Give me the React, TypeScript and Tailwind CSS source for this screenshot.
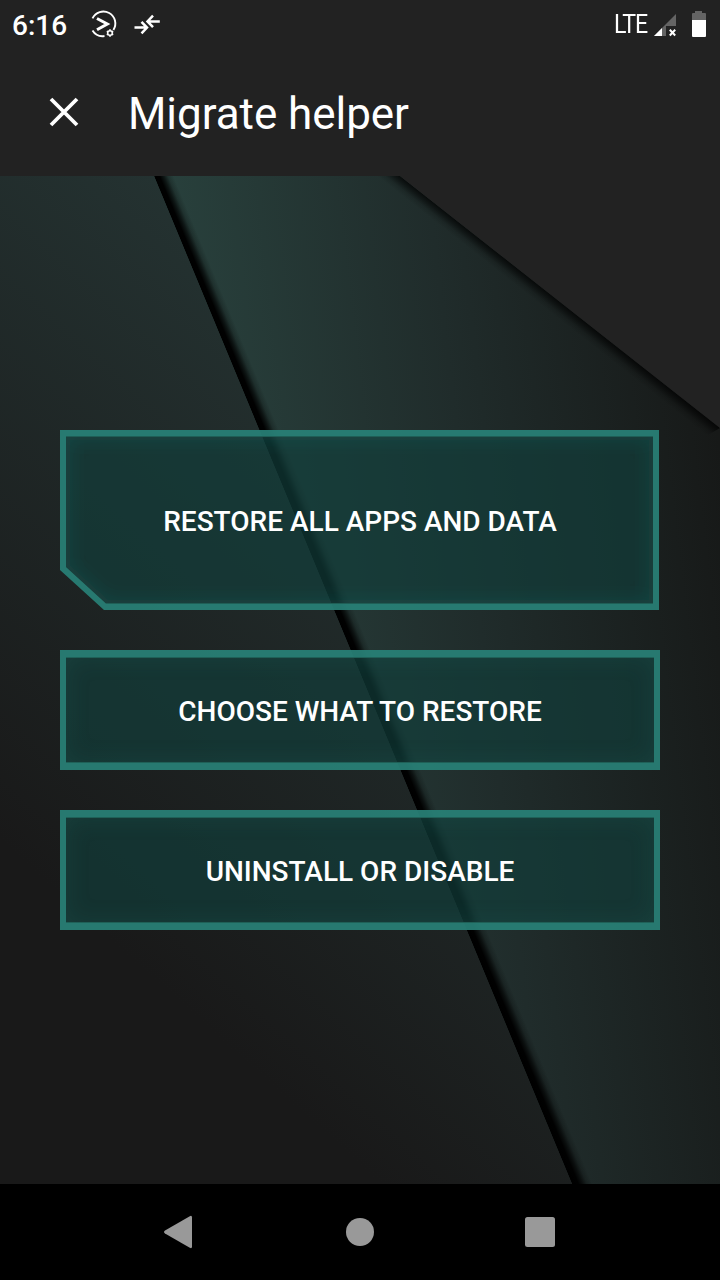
import React from "react";

function Backdrop() {
  return (
    <svg className="absolute inset-0 h-full w-full" viewBox="0 176 720 1008" preserveAspectRatio="none" aria-hidden="true">
      <defs>
        <linearGradient id="left" gradientUnits="userSpaceOnUse" x1="155" y1="176" x2="-245" y2="620">
          <stop offset="0" stopColor="#243231" />
          <stop offset="1" stopColor="#191919" />
        </linearGradient>
        <linearGradient id="right" gradientUnits="userSpaceOnUse" x1="165" y1="176" x2="680" y2="114">
          <stop offset="0" stopColor="#28403c" />
          <stop offset="0.5" stopColor="#202c2b" />
          <stop offset="1" stopColor="#171918" />
        </linearGradient>
        <linearGradient id="seam" gradientUnits="userSpaceOnUse" x1="154" y1="176" x2="170.600" y2="169.100">
          <stop offset="0" stopColor="#000" />
          <stop offset="0.28" stopColor="#000" stopOpacity="0.98" />
          <stop offset="0.5" stopColor="#000" stopOpacity="0.65" />
          <stop offset="0.72" stopColor="#000" stopOpacity="0.22" />
          <stop offset="1" stopColor="#000" stopOpacity="0" />
        </linearGradient>
        <linearGradient id="corner" gradientUnits="userSpaceOnUse" x1="400" y1="176" x2="391.300" y2="187.050">
          <stop offset="0" stopColor="#000" stopOpacity="0.75" />
          <stop offset="0.3" stopColor="#000" stopOpacity="0.5" />
          <stop offset="0.65" stopColor="#000" stopOpacity="0.15" />
          <stop offset="1" stopColor="#000" stopOpacity="0" />
        </linearGradient>
      </defs>
      <rect y="176" width="720" height="1008" fill="url(#right)" />
      <polygon points="154,176 200,176 618,1184 572,1184" fill="url(#seam)" />
      <polygon points="0,176 154,176 572,1184 0,1184" fill="url(#left)" />
      <polygon points="370,176 400,176 720,428 703,438" fill="url(#corner)" />
      <polygon points="400,176 720,176 720,428" fill="#222222" />
    </svg>
  );
}

function CutFrame() {
  return (
    <svg className="absolute inset-0" width="600" height="180" viewBox="0 0 600 180" aria-hidden="true">
      <defs>
        <clipPath id="inner">
          <path d="M6 6H593V173.500H46L6 137Z" />
        </clipPath>
        <filter id="soft" x="-10%" y="-20%" width="120%" height="140%">
          <feGaussianBlur stdDeviation="9" />
        </filter>
      </defs>
      <path d="M6 6H593V173.500H46L6 137Z" fill="#123e3b" fillOpacity="0.68" />
      <g clipPath="url(#inner)">
        <path d="M0 0H599V180H44L0 140Z" fill="none" stroke="#2b8377" strokeOpacity="0.2" strokeWidth="20" filter="url(#soft)" />
      </g>
      <path fillRule="evenodd" d="M0 0H599V180H44L0 140ZM6 6V137L46 173.500H593V6Z" fill="#288177" fillOpacity="0.92" />
      <path d="M6 6.500H593M46 173.500H593" stroke="#1f5e56" strokeWidth="1" />
    </svg>
  );
}

function MenuButton({ label, cut = false }: { label: string; cut?: boolean }) {
  return (
    <button
      className={
        cut
          ? "relative flex h-[180px] w-full items-center justify-center"
          : "relative flex h-[120px] w-full items-center justify-center border-x-6 border-y-7 border-[#288177]/92 bg-[#123e3b]/68 bg-clip-padding shadow-[inset_0_0_24px_rgba(43,131,119,0.16),inset_0_1px_0_#1f5e56,inset_0_-1px_0_#1f5e56]"
      }
    >
      {cut && <CutFrame />}
      <span className="relative pt-[4px] text-[28px] leading-8 font-medium whitespace-nowrap">{label}</span>
    </button>
  );
}

function StatusBar() {
  return (
    <div className="flex h-12 items-center bg-[#222222] pl-3">
      <span className="w-[78px] pt-[3px] text-[28px] leading-8 font-medium">6:16</span>
      <svg width="28" height="30" viewBox="0 0 28 30" fill="none" stroke="#fff" aria-hidden="true">
        <path d="M2.500 9.300A12 12 0 1 1 23.400 21M2.500 21.500A12 12 0 0 0 14.500 27" strokeWidth="1.900" />
        <path d="M7 9.500L17.300 15L7 20.800" strokeWidth="3" />
        <circle cx="20" cy="24" r="2.300" strokeWidth="1.500" />
        <path d="M20 20.300v1.400M20 26.300v1.400M16.800 22.200l1.200.7M22 25.100l1.200.7M16.800 25.800l1.200-.7M22 22.900l1.200-.7" strokeWidth="1.700" />
      </svg>
      <svg className="ml-4" width="28" height="30" viewBox="0 0 28 30" fill="none" stroke="#fff" strokeWidth="2.500" aria-hidden="true">
        <path d="M0.500 18.600H12M7.500 12.800L13 18.600L7.500 24.300M25.800 12.400H15M19 6.600L13.500 12.400L19 18.100" />
      </svg>
      <span className="ml-auto w-[40px] origin-left scale-x-[0.89] text-[26px] leading-8 tracking-[-1.2px]">LTE</span>
      <svg className="mt-px" width="24" height="24" viewBox="0 0 24 24" aria-hidden="true">
        <path d="M0 23L22 1V13H12V23Z" fill="#646464" />
        <path d="M0 23L8 15V23Z" fill="#fff" />
        <path d="M15.800 16.800L21.200 22.500M21.200 16.800L15.800 22.500" stroke="#fff" strokeWidth="2" />
      </svg>
      <svg className="mr-[13px] ml-[13px]" width="16" height="26" viewBox="0 0 16 26" aria-hidden="true">
        <path d="M4 0H11V2H14Q15 2 15 3V9H1V3Q1 2 2 2H4Z" fill="#646464" />
        <path d="M1 9H15V25Q15 26 14 26H2Q1 26 1 25Z" fill="#fff" />
      </svg>
    </div>
  );
}

export default function App() {
  return (
    <div className="flex h-[1280px] w-[720px] flex-col overflow-hidden bg-black font-[Roboto,sans-serif] text-white">
      <StatusBar />
      <header className="flex h-32 items-center bg-[#222222] pl-12">
        <button aria-label="Close">
          <svg width="32" height="32" viewBox="0 0 32 32" fill="none" stroke="#fff" strokeWidth="3.800" aria-hidden="true">
            <path d="M3 3L29 29M29 3L3 29" />
          </svg>
        </button>
        <h1 className="ml-12 pt-[3px] text-[44px] leading-[52px] font-normal tracking-[-0.05px]">Migrate helper</h1>
      </header>
      <main className="relative flex h-[1008px] flex-col justify-center gap-10 px-[60px]">
        <Backdrop />
        <MenuButton label="RESTORE ALL APPS AND DATA" cut />
        <MenuButton label="CHOOSE WHAT TO RESTORE" />
        <MenuButton label="UNINSTALL OR DISABLE" />
      </main>
      <nav className="flex h-24 items-center justify-center gap-[148px] bg-black">
        <button aria-label="Back">
          <svg width="32" height="34" viewBox="0 0 32 34" fill="#999999" aria-hidden="true">
            <path d="M1 15.600L25.800 1.200Q28 0 28 2.500V31.500Q28 34 25.800 32.800L1 18.400Q-1 17 1 15.600Z" />
          </svg>
        </button>
        <button aria-label="Home">
          <svg width="32" height="32" viewBox="0 0 32 32" aria-hidden="true">
            <circle cx="16" cy="16" r="14" fill="#999999" />
          </svg>
        </button>
        <button aria-label="Recents">
          <svg width="32" height="32" viewBox="0 0 32 32" aria-hidden="true">
            <rect x="1" y="1" width="30" height="30" rx="2.500" fill="#999999" />
          </svg>
        </button>
      </nav>
    </div>
  );
}
